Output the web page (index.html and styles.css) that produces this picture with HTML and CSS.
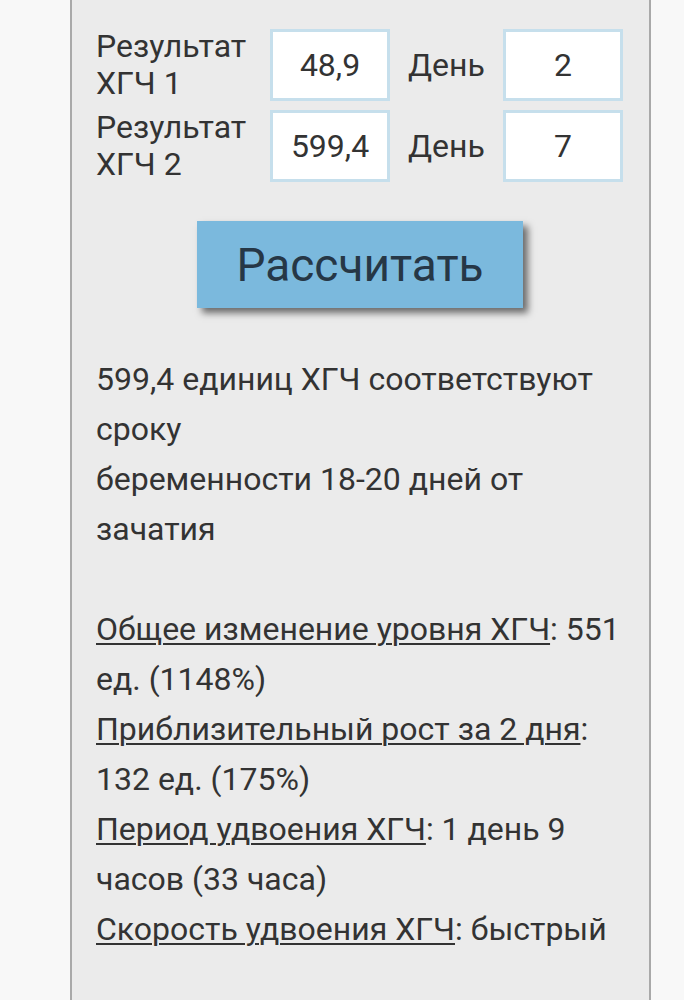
FILE: index.html
```html
<!DOCTYPE html>
<html lang="ru">
<head>
    <meta charset="UTF-8">
    <meta name="viewport" content="width=device-width, initial-scale=1.0">
    <title>Калькулятор ХГЧ</title>
    <link rel="stylesheet" href="styles.css">
</head>
<body>

    <div class="calc">
        <div class="row">
            <div class="label">Результат ХГЧ 1</div>
            <input class="field" type="text" value="48,9">
            <div class="day">День</div>
            <input class="field" type="text" value="2">
        </div>
        <div class="row">
            <div class="label">Результат ХГЧ 2</div>
            <input class="field" type="text" value="599,4">
            <div class="day">День</div>
            <input class="field" type="text" value="7">
        </div>

        <div class="actions">
            <button class="btn">Рассчитать</button>
        </div>

        <div class="result">
            599,4 единиц ХГЧ соответствуют сроку<br>
            беременности 18-20 дней от зачатия<br>
            <br>
            <span class="term">Общее изменение уровня ХГЧ</span>: 551 ед. (1148%)<br>
            <span class="term">Приблизительный рост за 2 дня</span>: 132 ед. (175%)<br>
            <span class="term">Период удвоения ХГЧ</span>: 1 день 9 часов (33 часа)<br>
            <span class="term">Скорость удвоения ХГЧ</span>: быстрый
        </div>
    </div>

</body>
</html>
```

FILE: styles.css
```css
body {
    margin: 0;
    background: #f8f8f8;
    font-family: Roboto, "Liberation Sans", sans-serif;
    color: #333;
}
.calc {
    margin-left: 70px;
    width: 528px;
    min-height: 1000px;
    padding: 29px 25px 0 24px;
    background: #ebebeb;
    border-left: 2px solid #a9a9a9;
    border-right: 2px solid #a9a9a9;
}
.row {
    display: flex;
    align-items: center;
    height: 72px;
    margin-bottom: 9px;
}
.label {
    width: 174px;
    font-size: 32px;
    line-height: 37px;
}
.field {
    box-sizing: border-box;
    width: 120px;
    height: 72px;
    padding: 0;
    border: 3px solid #c6dfec;
    background: #fff;
    font-family: inherit;
    font-size: 32px;
    color: #333;
    text-align: center;
}
.day {
    width: 113px;
    padding-left: 18px;
    box-sizing: border-box;
    font-size: 32px;
}
.actions {
    text-align: center;
    padding-top: 30px;
}
.btn {
    width: 326px;
    height: 87px;
    border: none;
    background: #7bb9dd;
    color: #263746;
    font-family: inherit;
    font-size: 46px;
    box-shadow: 5px 5px 7px rgba(0, 0, 0, 0.55);
    cursor: pointer;
}
.result {
    margin-top: 46px;
    font-size: 32px;
    line-height: 50px;
}
.term {
    text-decoration: underline;
    text-decoration-thickness: 2px;
    text-underline-offset: 3px;
}
```
